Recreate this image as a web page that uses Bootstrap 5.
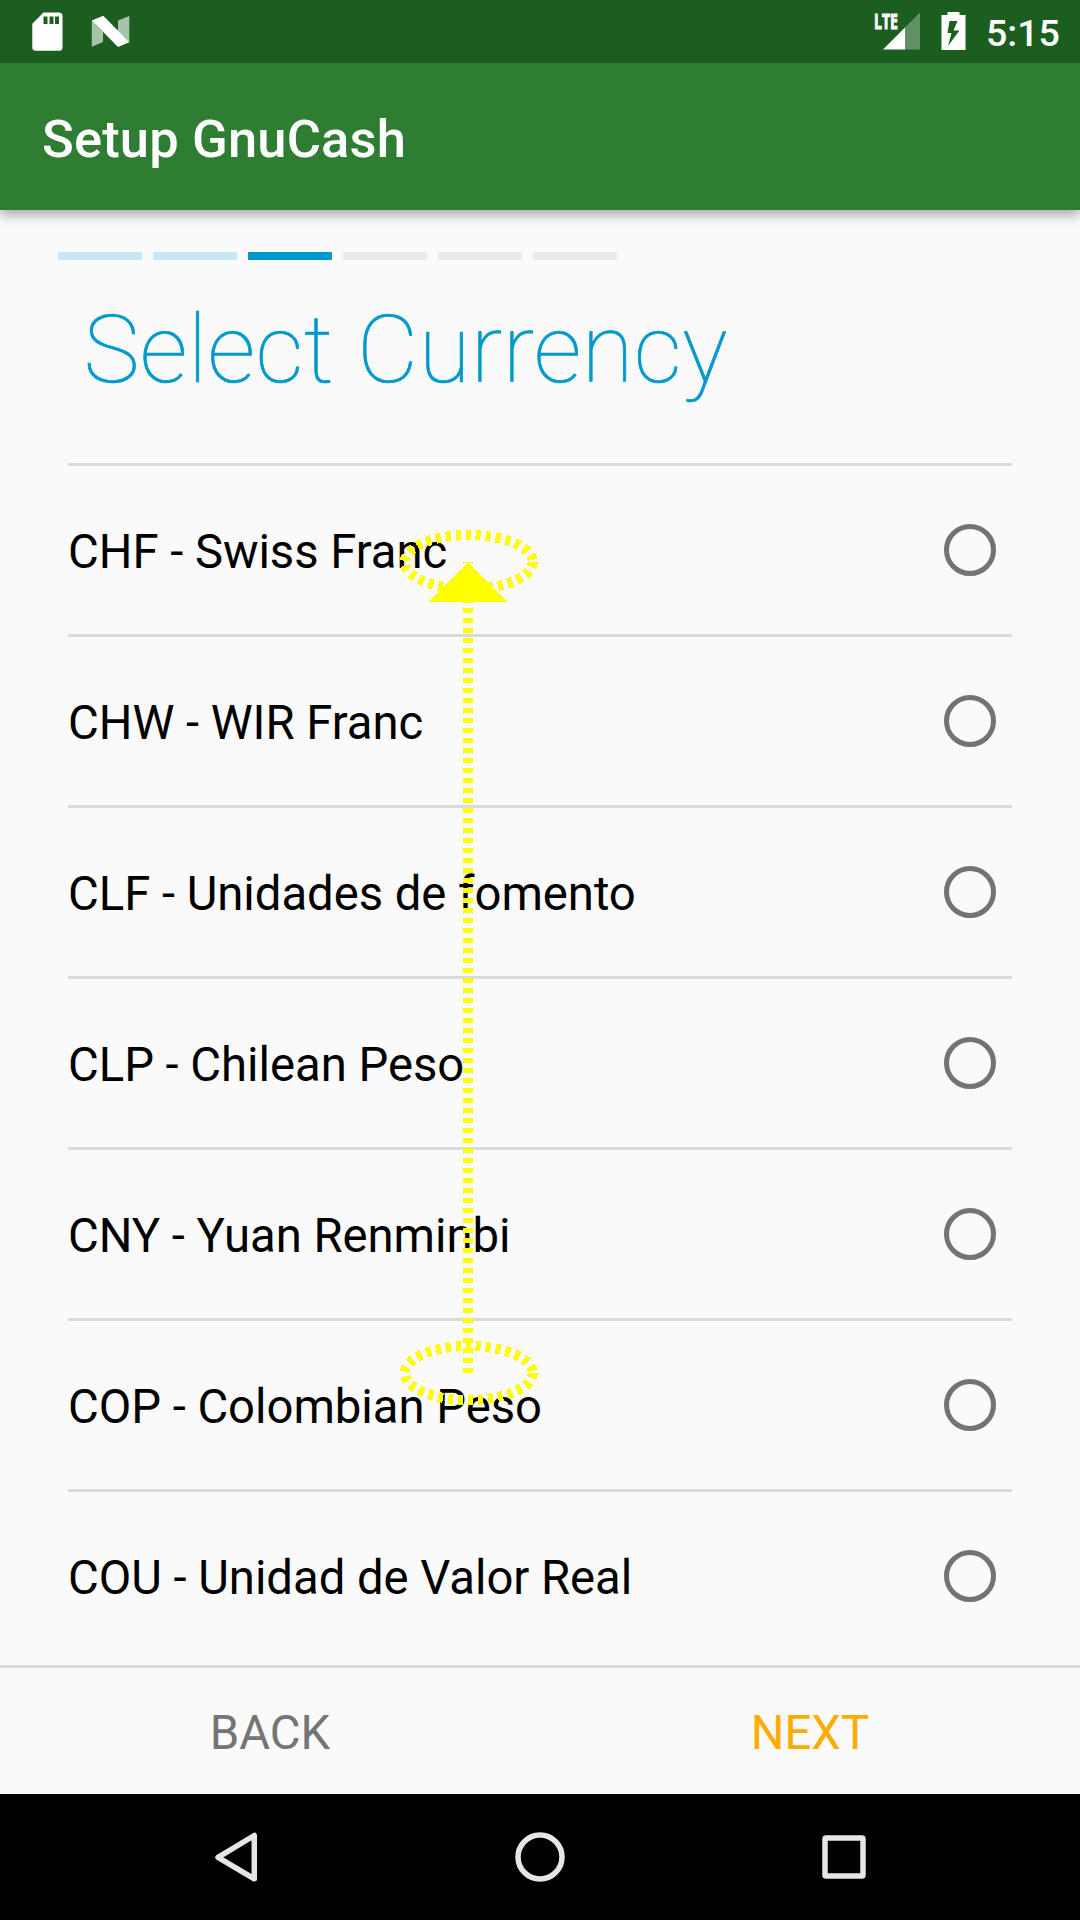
<!DOCTYPE html>
<html lang="en">
<head>
<meta charset="utf-8">
<meta name="viewport" content="width=device-width, initial-scale=1">
<title>Setup GnuCash</title>
<link href="https://cdn.jsdelivr.net/npm/bootstrap@5.3.0/dist/css/bootstrap.min.css" rel="stylesheet">
<style>
  body { font-family: Roboto, "Noto Sans", sans-serif; background: #fafafa; color: #000; }
  .screen { width: 1080px; height: 1920px; }
  .statusbar { height: 63px; background: #1b5e20; }
  .clock { width: 94px; font-size: 37.5px; font-weight: 500; line-height: 43px; padding-top: 3px; }
  .appbar { height: 147px; background: #2e7d32; padding-left: 42px; box-shadow: 0 5px 11px rgba(0,0,0,.33); z-index: 1; }
  .appbar h1 { font-size: 52.5px; font-weight: 500; line-height: 62px; padding-top: 4px; letter-spacing: .15px; }
  .steps { padding: 42px 58px 0; gap: 11px; }
  .step { width: 84px; height: 8px; background: #eaeaea; }
  .step.done { background: #c5e8f4; }
  .step.current { background: #0099cc; }
  .page-title { font-size: 94.5px; font-weight: 100; line-height: 112px; color: #0099cc; padding: 34px 83.5px 57px; letter-spacing: .36px; -webkit-text-stroke: .7px #0099cc; }
  .choices { margin: 0 68px; min-height: 0; }
  .choice { height: 171px; border-top: 3px solid #dadada; font-size: 47.25px; line-height: 56px; padding-right: 16px; flex: none; }
  .choice span { padding-top: 3px; letter-spacing: -.03px; }
  .radio-ring { width: 52px; height: 52px; border: 5px solid #737373; border-radius: 50%; }
  .actions { height: 129px; border-top: 3px solid #dadada; font-size: 47.25px; }
  .action { line-height: 56px; padding-top: 4px; color: #757575; }
  .action.next { color: #ffab00; }
  .navkeys { height: 126px; background: #000; }
  .gesture { left: 390px; top: 520px; }
</style>
</head>
<body>
<div class="screen d-flex flex-column position-relative overflow-hidden">
  <header class="statusbar d-flex justify-content-between flex-shrink-0 text-white">
    <svg width="160" height="63">
      <path fill="#fff" fill-rule="evenodd" d="M43.500 12.500H59Q62.500 12.500 62.500 16V47.500Q62.500 50.700 59 50.700H36Q32.300 50.700 32.300 47.500V23.700ZM43.500 16.500V24H47.500V16.500ZM49.500 16.500V24H53.500V16.500ZM55 16.500V24H59V16.500Z"/>
      <path fill="#a9c2ab" d="M91.800 20.500 103 32V42L91.800 46.800ZM118 20.500 129.300 16V42.500L118 31Z"/>
      <path fill="#fff" d="M91.800 20.500 103.300 15.800 129.300 42.300 118 47Z"/>
    </svg>
    <div class="d-flex">
      <svg width="112" height="63">
        <text x="0" y="29" fill="#fff" stroke="#fff" stroke-width="1" font-family="Open Sans, sans-serif" font-size="22" font-weight="700" textLength="24" lengthAdjust="spacingAndGlyphs">LTE</text>
        <path fill="#609064" d="M31 27.500 46 12.500V49.500H31Z"/>
        <path fill="#fff" d="M9 49.500 31 27.500V49.500Z"/>
        <path fill="#fff" fill-rule="evenodd" d="M67.500 15H73.500V12H85.500V15H91.500V50H67.500ZM75.500 21 73.500 33H77.500L74 46 85.500 30.500H79.500L83.500 21Z"/>
      </svg>
      <div class="clock d-flex align-items-center">5:15</div>
    </div>
  </header>
  <nav class="appbar d-flex align-items-center flex-shrink-0 text-white position-relative"><h1 class="m-0">Setup GnuCash</h1></nav>
  <main class="d-flex flex-column flex-grow-1 overflow-hidden">
    <div class="steps d-flex flex-shrink-0">
      <div class="step done"></div><div class="step done"></div><div class="step current"></div>
      <div class="step"></div><div class="step"></div><div class="step"></div>
    </div>
    <h2 class="page-title m-0 flex-shrink-0">Select Currency</h2>
    <div class="choices d-flex flex-column flex-grow-1 overflow-hidden">
      <div class="choice d-flex align-items-center justify-content-between"><span>CHF - Swiss Franc</span><i class="radio-ring"></i></div>
      <div class="choice d-flex align-items-center justify-content-between"><span>CHW - WIR Franc</span><i class="radio-ring"></i></div>
      <div class="choice d-flex align-items-center justify-content-between"><span>CLF - Unidades de fomento</span><i class="radio-ring"></i></div>
      <div class="choice d-flex align-items-center justify-content-between"><span>CLP - Chilean Peso</span><i class="radio-ring"></i></div>
      <div class="choice d-flex align-items-center justify-content-between"><span>CNY - Yuan Renminbi</span><i class="radio-ring"></i></div>
      <div class="choice d-flex align-items-center justify-content-between"><span>COP - Colombian Peso</span><i class="radio-ring"></i></div>
      <div class="choice d-flex align-items-center justify-content-between"><span>COU - Unidad de Valor Real</span><i class="radio-ring"></i></div>
    </div>
  </main>
  <div class="actions d-flex align-items-center flex-shrink-0 text-center">
    <div class="action w-50">BACK</div>
    <div class="action next w-50">NEXT</div>
  </div>
  <footer class="navkeys flex-shrink-0">
    <svg class="d-block" width="1080" height="126" fill="none" stroke="#e6e6e6" stroke-width="5.500" stroke-linejoin="round">
      <path d="M254.300 41.500V84.800L218 63.300Z"/>
      <circle cx="540" cy="63" r="22"/>
      <rect x="825" y="44" width="38" height="38" rx="1"/>
    </svg>
  </footer>
  <svg class="gesture position-absolute" width="160" height="900" viewBox="390 520 160 900" fill="none" stroke="#ff0" stroke-width="10" stroke-dasharray="5 5" shape-rendering="crispEdges">
    <ellipse cx="468.700" cy="562" rx="64" ry="27"/>
    <ellipse cx="468.700" cy="1373" rx="64" ry="27"/>
    <path d="M468 1373V562"/>
    <path d="M468 562 507.500 602H428.500Z" fill="#ff0" stroke="none"/>
  </svg>
</div>
<script src="https://cdn.jsdelivr.net/npm/bootstrap@5.3.0/dist/js/bootstrap.bundle.min.js"></script>
</body>
</html>
